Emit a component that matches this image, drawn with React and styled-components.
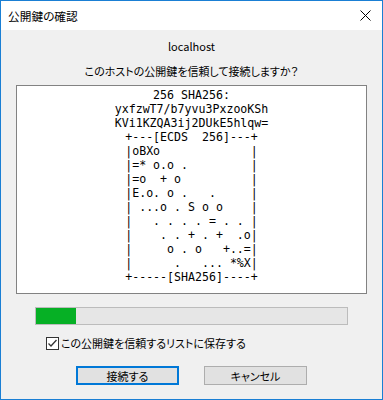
import React from "react";
import styled, { createGlobalStyle } from "styled-components";

const GlobalStyle = createGlobalStyle`
  html, body {
    margin: 0;
    padding: 0;
    background: #f0f0f0;
  }
  * { box-sizing: border-box; }
`;

const UI_FONT = `"Noto Sans CJK JP", "Noto Sans", sans-serif`;

const Window = styled.div`
  width: 383px;
  height: 400px;
  border: 1px solid #1a7fd4;
  background: #f0f0f0;
  display: flex;
  flex-direction: column;
  font-family: ${UI_FONT};
  font-size: 11px;
  color: #000;
`;

const TitleBar = styled.div`
  height: 29px;
  background: #fff;
  display: flex;
  align-items: center;
  justify-content: space-between;
  padding-left: 7px;
`;

const Title = styled.span`
  font-size: 11.7px;
  line-height: 16px;
  font-feature-settings: "palt";
`;

const CloseButton = styled.div`
  width: 34px;
  height: 29px;
  display: flex;
  align-items: center;
  justify-content: center;
`;

const Body = styled.div`
  flex: 1;
  display: flex;
  flex-direction: column;
  align-items: center;
  padding: 8px 15px 0;
`;

const Line = styled.div`
  line-height: 16px;
  font-size: 11px;
  text-align: center;
  font-feature-settings: "palt";
  margin-top: ${(p) => p.$mt || 0}px;
`;

const FingerprintBox = styled.pre`
  align-self: stretch;
  margin: 6px 0 0;
  height: 209px;
  background: #fff;
  border: 1px solid #828282;
  padding: 2px 0 0;
  font-family: "DejaVu Sans Mono", "Liberation Mono", monospace;
  font-size: 11.6px;
  line-height: 14px;
  text-align: center;
  color: #000;
  white-space: pre;
`;

const Progress = styled.div`
  margin-top: 13px;
  width: 313px;
  height: 18px;
  border: 1px solid #bcbcbc;
  background: #e6e6e6;
  display: flex;
`;

const ProgressFill = styled.div`
  height: 100%;
  background: #06b025;
`;

const CheckRow = styled.label`
  align-self: flex-start;
  margin: 11px 0 0 30px;
  display: flex;
  align-items: center;
  gap: 2px;
  height: 14px;
  line-height: 14px;
  font-size: 11px;
  font-feature-settings: "palt";
`;

const CheckBox = styled.span`
  width: 13px;
  height: 13px;
  border: 1px solid #333;
  background: #fff;
  display: flex;
  align-items: center;
  justify-content: center;
`;

const ButtonRow = styled.div`
  margin-top: 16px;
  display: flex;
  gap: 25px;
  justify-content: center;
`;

const Button = styled.button`
  width: 103px;
  height: 19px;
  padding: 0;
  background: #e1e1e1;
  border: ${(p) => (p.$primary ? "2px solid #0078d7" : "1px solid #adadad")};
  font-family: ${UI_FONT};
  font-size: 11px;
  line-height: 14px;
  color: #000;
  font-feature-settings: "palt";
  display: flex;
  align-items: center;
  justify-content: center;
`;

const fingerprint = [
  "256 SHA256:",
  "yxfzwT7/b7yvu3PxzooKSh",
  "KVi1KZQA3ij2DUkE5hlqw=",
  "+---[ECDS  256]---+",
  "|oBXo             |",
  "|=* o.o .         |",
  "|=o  + o          |",
  "|E.o. o .   .     |",
  "| ...o . S o o    |",
  "|   . . . . = . . |",
  "|    . . + . +  .o|",
  "|     o . o   +..=|",
  "|      .   ... *%X|",
  "+-----[SHA256]----+",
].join("\n");

export default function App() {
  return (
    <>
      <GlobalStyle />
      <Window>
        <TitleBar>
          <Title>公開鍵の確認</Title>
          <CloseButton>
            <svg width="11" height="11" viewBox="0 0 11 11">
              <path d="M0.5 0.5 L10.5 10.5 M10.5 0.5 L0.5 10.5" stroke="#000" strokeWidth="1" />
            </svg>
          </CloseButton>
        </TitleBar>
        <Body>
          <Line>localhost</Line>
          <Line $mt={9}>このホストの公開鍵を信頼して接続しますか？</Line>
          <FingerprintBox>{fingerprint}</FingerprintBox>
          <Progress>
            <ProgressFill style={{ width: "40px" }} />
          </Progress>
          <CheckRow>
            <CheckBox>
              <svg width="11" height="11" viewBox="0 0 11 11">
                <path d="M1.5 5.5 L4 8 L9.5 2" stroke="#333" strokeWidth="1.3" fill="none" />
              </svg>
            </CheckBox>
            この公開鍵を信頼するリストに保存する
          </CheckRow>
          <ButtonRow>
            <Button $primary>接続する</Button>
            <Button>キャンセル</Button>
          </ButtonRow>
        </Body>
      </Window>
    </>
  );
}
